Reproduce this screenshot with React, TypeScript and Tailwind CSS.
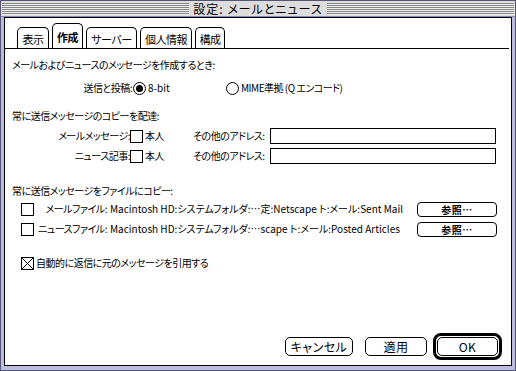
import React from 'react';

const Check = ({ checked = false }: { checked?: boolean }) => (
  <div className="w-[13px] h-[13px] border border-black bg-white flex-shrink-0">
    {checked && (
      <svg width="11" height="11" viewBox="0 0 11 11" className="block">
        <path d="M0 0L11 11M11 0L0 11" stroke="black" strokeWidth="1" />
      </svg>
    )}
  </div>
);

const Radio = ({ on = false }: { on?: boolean }) => (
  <div className="w-[13px] h-[13px] rounded-full border border-black bg-white flex items-center justify-center flex-shrink-0">
    {on && <div className="w-[7px] h-[7px] rounded-full bg-black" />}
  </div>
);

const Stripes = () => (
  <div className="flex-1 h-[12px] bg-[repeating-linear-gradient(to_bottom,#888888_0px,#888888_1px,#eeeeee_1px,#eeeeee_2px)]" />
);

const tabs = [
  { label: '表示', w: 'w-[32px]' },
  { label: '作成', w: 'w-[31px]', active: true },
  { label: 'サーバー', w: 'w-[51px]' },
  { label: '個人情報', w: 'w-[52px]' },
  { label: '構成', w: 'w-[30px]' },
];

const FileRow = ({ label, path }: { label: string; path: string }) => (
  <div className="flex items-center h-[16px] pl-[9px]">
    <Check />
    <div className="w-[73px] text-right whitespace-nowrap">{label}</div>
    <div className="ml-[3px] w-[307px] whitespace-nowrap overflow-hidden tracking-[0px]">{path}</div>
    <button className="w-[80px] h-[15px] border border-black rounded-[4px] bg-white font-bold leading-[13px] tracking-[0.5px]">参照…</button>
  </div>
);

export default function App() {
  return (
    <div className="w-[516px] h-[371px] bg-[#bcbcdc] border border-[#555577] flex flex-col [font-family:'Noto_Sans_CJK_JP',sans-serif] [font-feature-settings:'palt'] text-[10px] tracking-[-0.5px] text-black">
      {/* title bar */}
      <div className="h-[16px] bg-[#dddddd] flex items-center pl-[1px] pr-[1px] border-b border-[#8888bb]">
        <Stripes />
        <div className="px-[4px] text-[12px] leading-[14px] tracking-[1px] whitespace-nowrap">設定: メールとニュース</div>
        <Stripes />
      </div>

      <div className="flex-1 mx-[3px] mb-[4px] border border-black bg-white flex flex-col">
        {/* tabs */}
        <div className="h-[31px] flex items-end gap-[3px] pl-[12px] mr-[2px] border-b border-black">
          {tabs.map((t) => (
            <div
              key={t.label}
              className={
                t.active
                  ? `${t.w} h-[25px] border border-b-0 border-black rounded-t-[5px] flex items-center justify-center font-bold pt-[2px] whitespace-nowrap text-[11px]`
                  : `${t.w} h-[21px] border border-b-0 border-black rounded-t-[5px] flex items-center justify-center pt-[3px] whitespace-nowrap text-[11px]`
              }
            >
              {t.label}
            </div>
          ))}
        </div>

        <div className="flex-1 flex flex-col pl-[7px] leading-[16px] whitespace-nowrap">
          <div className="mt-[8px] h-[16px]">メールおよびニュースのメッセージを作成するとき:</div>

          <div className="mt-[7px] h-[16px] flex items-center">
            <div className="w-[120px] text-right">送信と投稿:</div>
            <div className="ml-[1px]"><Radio on /></div>
            <div className="ml-[2px] w-[78px] tracking-[0px]">8-bit</div>
            <Radio />
            <div className="ml-[2px]">MIME準拠 (Q エンコード)</div>
          </div>

          <div className="mt-[12px] h-[16px]">常に送信メッセージのコピーを配達:</div>

          <div className="mt-[4px] h-[16px] flex items-center">
            <div className="w-[118px] text-right">メールメッセージ:</div>
            <Check />
            <div className="ml-[2px] w-[48px]">本人</div>
            <div className="w-[77px]">その他のアドレス:</div>
            <div className="w-[226px] h-[16px] border border-black" />
          </div>

          <div className="mt-[4px] h-[16px] flex items-center">
            <div className="w-[118px] text-right">ニュース記事:</div>
            <Check />
            <div className="ml-[2px] w-[48px]">本人</div>
            <div className="w-[77px]">その他のアドレス:</div>
            <div className="w-[226px] h-[16px] border border-black" />
          </div>

          <div className="mt-[19px] h-[16px]">常に送信メッセージをファイルにコピー:</div>

          <div className="mt-[2px]">
            <FileRow label="メールファイル:" path="Macintosh HD:システムフォルダ:…定:Netscape ト:メール:Sent Mail" />
          </div>
          <div className="mt-[4px]">
            <FileRow label="ニュースファイル:" path="Macintosh HD:システムフォルダ:…scape ト:メール:Posted Articles" />
          </div>

          <div className="mt-[18px] h-[16px] flex items-center pl-[9px]">
            <Check checked />
            <div className="ml-[2px]">自動的に返信に元のメッセージを引用する</div>
          </div>

          {/* buttons */}
          <div className="mt-auto flex items-center justify-end pr-[9px] pb-[5px] text-[12px] tracking-[0.5px]">
            <button className="w-[68px] h-[19px] border border-black rounded-[5px] bg-white leading-[17px]">キャンセル</button>
            <button className="ml-[12px] w-[62px] h-[19px] border border-black rounded-[5px] bg-white leading-[17px]">適用</button>
            <div className="ml-[6px] w-[69px] h-[27px] border-[3px] border-black rounded-[8px] p-[1px]">
              <button className="w-full h-full border border-black rounded-[5px] bg-white leading-[15px]">OK</button>
            </div>
          </div>
        </div>
      </div>
    </div>
  );
}
